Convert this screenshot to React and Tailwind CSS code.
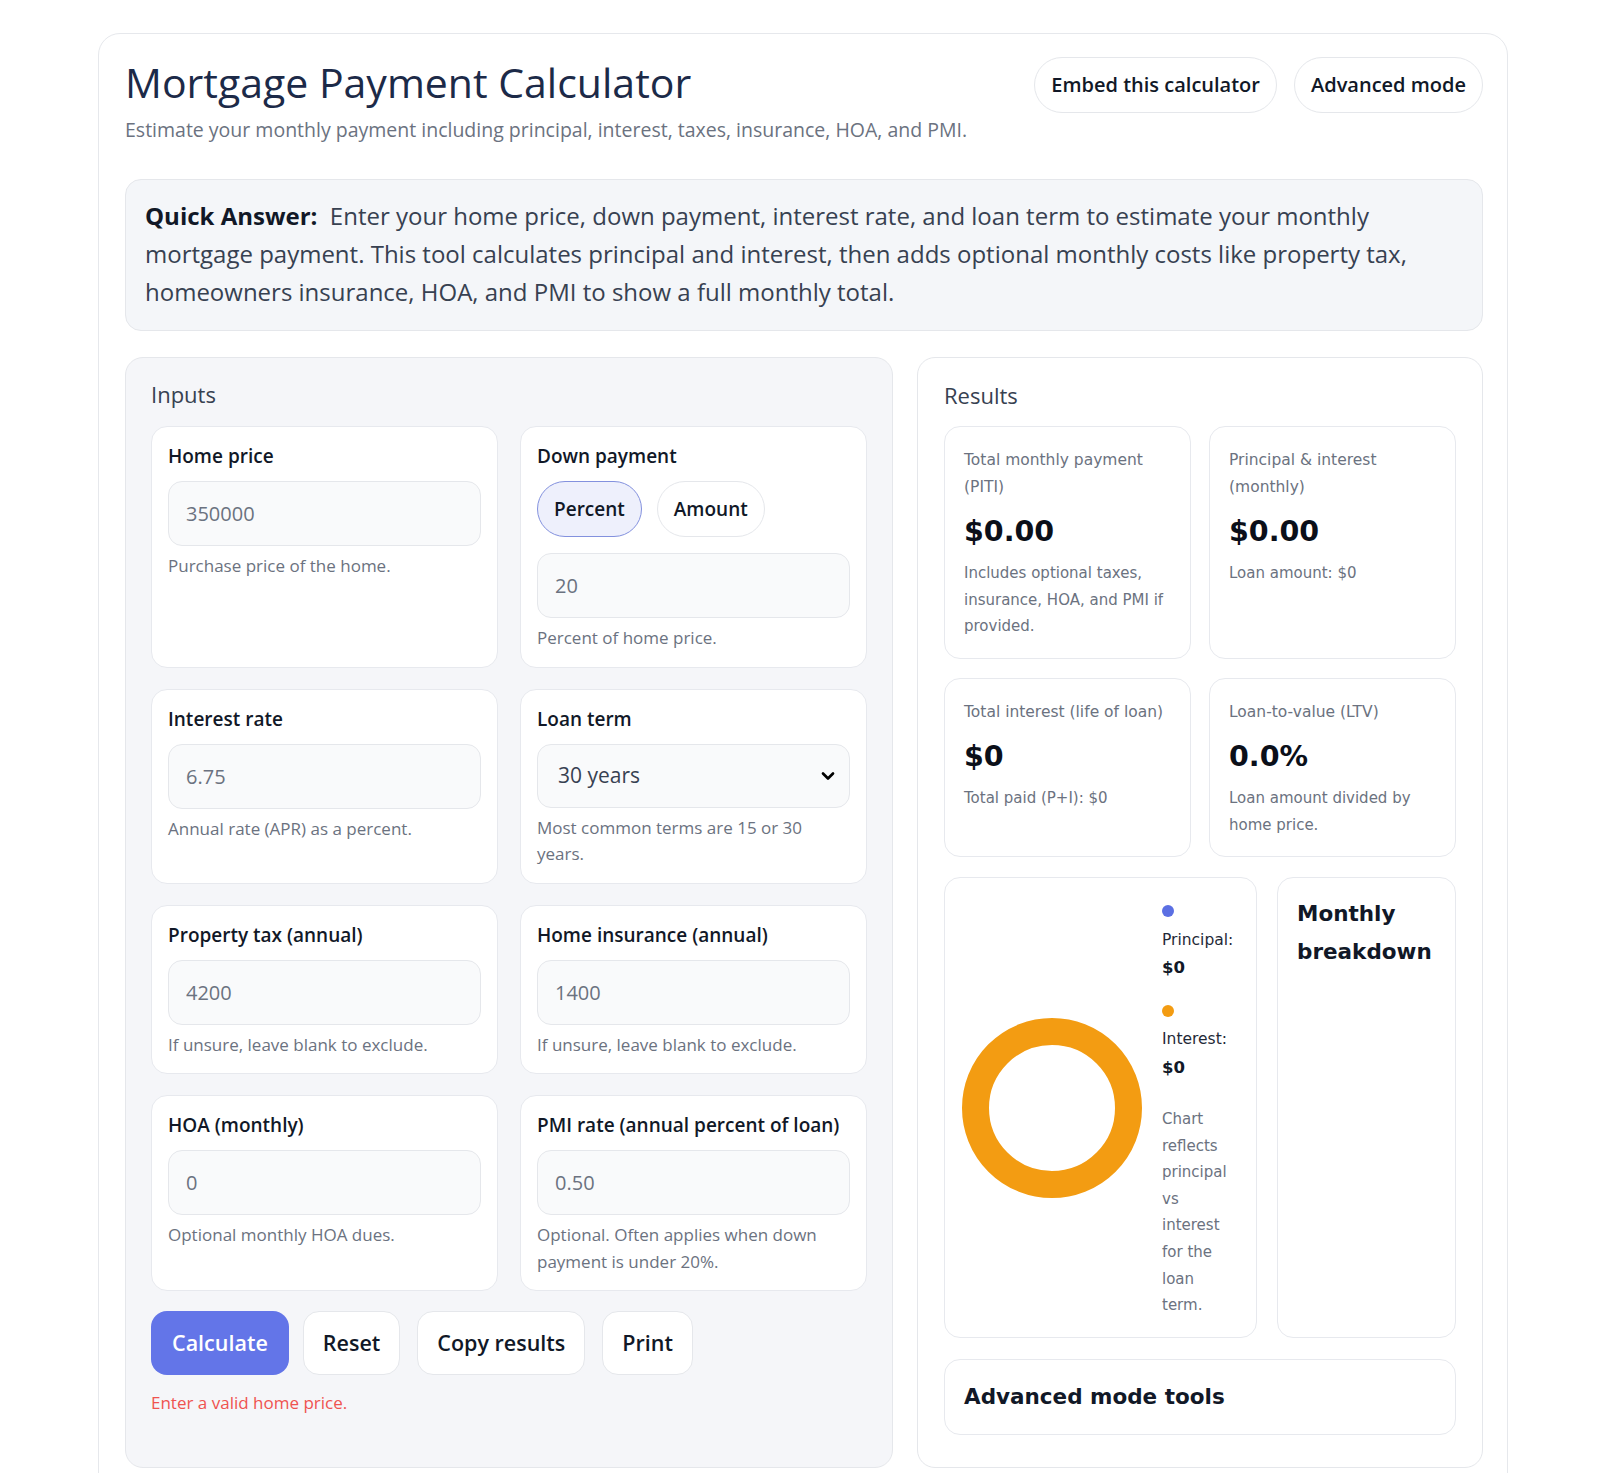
import { ChevronDown } from "lucide-react";

function Field({ label, help, children }) {
  return (
    <div className="rounded-[16px] border border-[#e7e9ee] bg-white px-[16px] pt-[16px] pb-[15px]">
      <div className="text-[19px] font-semibold leading-[26px] text-[#111827]">{label}</div>
      {children}
      <p className="mt-[7px] text-[17px] leading-[26.5px] text-[#6b7280]">{help}</p>
    </div>
  );
}

function TextInput({ value, className = "" }) {
  return (
    <input
      type="text"
      defaultValue={value}
      className={`block h-[65px] w-full rounded-[14px] border border-[#e5e7eb] bg-[#f9fafb] px-[17px] text-[20px] text-[#6b7280] outline-none ${className}`}
    />
  );
}

function Pill({ active, children }) {
  return (
    <button
      type="button"
      className={
        active
          ? "h-[56px] rounded-full border-[1.5px] border-[#8391de] bg-[#eef0fc] px-[16px] text-[19px] font-semibold text-[#111827]"
          : "h-[56px] rounded-full border border-[#e5e7eb] bg-white px-[16px] text-[19px] font-semibold text-[#111827]"
      }
    >
      {children}
    </button>
  );
}

function ResultCard({ label, value, desc }) {
  return (
    <div className="rounded-[16px] border border-[#e7e9ee] bg-white px-[19px] pt-[20px] pb-[18px] font-['DejaVu_Sans',sans-serif]">
      <div className="text-[15.5px] leading-[26.5px] text-[#6b7280]">{label}</div>
      <div className="mt-[12px] text-[28.5px] font-bold leading-[40px] text-[#0b0f19]">{value}</div>
      <div className="mt-[8px] text-[15px] leading-[26.5px] text-[#6b7280]">{desc}</div>
    </div>
  );
}

const actionButton =
  "h-[64px] rounded-[16px] border border-[#e5e7eb] bg-white px-[19px] text-[21.5px] font-semibold text-[#111827]";

export default function App() {
  return (
    <div className="min-h-screen bg-white pt-[33px] font-['Open_Sans',sans-serif]">
      <div className="ml-[98px] w-[1410px] rounded-[22px] border border-[#e6e8ec] bg-white pt-[23px] pb-[40px] pl-[26px] pr-[24px]">
        {/* Header */}
        <header className="flex items-start justify-between">
          <div>
            <h1 className="text-[41px] leading-[50px] text-[#1c2a48]">Mortgage Payment Calculator</h1>
            <p className="mt-[10px] text-[19.5px] leading-[26px] text-[#6b7280]">
              Estimate your monthly payment including principal, interest, taxes, insurance, HOA, and PMI.
            </p>
          </div>
          <div className="flex gap-[17px]">
            <button type="button" className="h-[56px] rounded-full border border-[#e5e7eb] bg-white px-[16px] text-[20px] font-semibold text-[#111827]">
              Embed this calculator
            </button>
            <button type="button" className="h-[56px] rounded-full border border-[#e5e7eb] bg-white px-[16px] text-[20px] font-semibold text-[#111827]">
              Advanced mode
            </button>
          </div>
        </header>

        {/* Quick answer */}
        <div className="mt-[36px] rounded-[16px] border border-[#e5e7eb] bg-[#f4f6f9] px-[19px] pt-[17px] pb-[19px]">
          <p className="text-[24px] leading-[38px] text-[#374151]">
            <strong className="font-bold text-[#111827]">Quick Answer:</strong>{"\u00a0 "}
            Enter your home price, down payment, interest rate, and loan term to estimate your monthly mortgage payment. This tool calculates principal and interest, then adds optional monthly costs like property tax, homeowners insurance, HOA, and PMI to show a full monthly total.
          </p>
        </div>

        {/* Main */}
        <div className="mt-[26px] grid grid-cols-[768px_1fr] gap-[24px]">
          {/* Inputs */}
          <section className="rounded-[18px] border border-[#e5e7eb] bg-[#f5f6f9] px-[25px] pt-[21px] pb-[24px]">
            <h2 className="text-[22px] leading-[30px] text-[#374151]">Inputs</h2>
            <div className="mt-[17px] grid grid-cols-2 gap-x-[22px] gap-y-[21px]">
              <Field label="Home price" help="Purchase price of the home.">
                <TextInput value="350000" className="mt-[12px]" />
              </Field>
              <Field label="Down payment" help="Percent of home price.">
                <div className="mt-[12px] flex gap-[15px]">
                  <Pill active>Percent</Pill>
                  <Pill>Amount</Pill>
                </div>
                <TextInput value="20" className="mt-[16px]" />
              </Field>
              <Field label="Interest rate" help="Annual rate (APR) as a percent.">
                <TextInput value="6.75" className="mt-[12px]" />
              </Field>
              <Field label="Loan term" help="Most common terms are 15 or 30 years.">
                <div className="relative mt-[12px]">
                  <select
                    defaultValue="30"
                    className="block h-[64px] w-full appearance-none rounded-[14px] border border-[#e5e7eb] bg-[#f9fafb] px-[20px] text-[21px] text-[#374151] outline-none"
                  >
                    <option value="15">15 years</option>
                    <option value="20">20 years</option>
                    <option value="30">30 years</option>
                  </select>
                  <ChevronDown className="pointer-events-none absolute right-[12px] top-[22px] h-[20px] w-[20px] text-black" strokeWidth={3.2} />
                </div>
              </Field>
              <Field label="Property tax (annual)" help="If unsure, leave blank to exclude.">
                <TextInput value="4200" className="mt-[12px]" />
              </Field>
              <Field label="Home insurance (annual)" help="If unsure, leave blank to exclude.">
                <TextInput value="1400" className="mt-[12px]" />
              </Field>
              <Field label="HOA (monthly)" help="Optional monthly HOA dues.">
                <TextInput value="0" className="mt-[12px]" />
              </Field>
              <Field label="PMI rate (annual percent of loan)" help="Optional. Often applies when down payment is under 20%.">
                <TextInput value="0.50" className="mt-[12px]" />
              </Field>
            </div>

            <div className="mt-[20px] flex gap-[17px]">
              <button type="button" className="-mr-[3px] h-[64px] rounded-[16px] bg-[#6375e8] px-[21px] text-[21.5px] font-semibold text-white">
                Calculate
              </button>
              <button type="button" className={actionButton}>
                Reset
              </button>
              <button type="button" className={actionButton}>
                Copy results
              </button>
              <button type="button" className={actionButton}>
                Print
              </button>
            </div>
            <p className="mt-[15px] text-[17px] leading-[26px] text-[#ef5350]">Enter a valid home price.</p>
          </section>

          {/* Results */}
          <section className="rounded-[18px] border border-[#e5e7eb] bg-white px-[26px] pt-[22px] pb-[32px]">
            <h2 className="text-[22px] leading-[30px] text-[#374151]">Results</h2>
            <div className="mt-[16px] grid grid-cols-2 gap-x-[18px] gap-y-[19px]">
              <ResultCard
                label="Total monthly payment (PITI)"
                value="$0.00"
                desc="Includes optional taxes, insurance, HOA, and PMI if provided."
              />
              <ResultCard label="Principal & interest (monthly)" value="$0.00" desc="Loan amount: $0" />
              <ResultCard label="Total interest (life of loan)" value="$0" desc="Total paid (P+I): $0" />
              <ResultCard label="Loan-to-value (LTV)" value="0.0%" desc="Loan amount divided by home price." />
            </div>

            <div className="mt-[20px] grid grid-cols-[313px_1fr] gap-[20px] font-['DejaVu_Sans',sans-serif]">
              {/* Principal vs interest chart */}
              <div className="flex items-center gap-[20px] rounded-[16px] border border-[#e7e9ee] bg-white px-[17px] pt-[19px] pb-[18px]">
                <svg width="180" height="180" viewBox="0 0 180 180" className="shrink-0">
                  <circle cx="90" cy="90" r="76.5" fill="none" stroke="#f39c12" strokeWidth="27" />
                </svg>
                <div className="w-[80px] self-start text-[15.5px] text-[#1f2937]">
                  <div className="leading-[28.5px]">
                    <div className="flex h-[28.5px] items-center">
                      <span className="inline-block h-[12px] w-[12px] rounded-full bg-[#5b6fe3]" />
                    </div>
                    <div>Principal:</div>
                    <div className="text-[16.5px] font-bold text-[#111827]">$0</div>
                  </div>
                  <div className="mt-[14px] leading-[28.5px]">
                    <div className="flex h-[28.5px] items-center">
                      <span className="inline-block h-[12px] w-[12px] rounded-full bg-[#f39c12]" />
                    </div>
                    <div>Interest:</div>
                    <div className="text-[16.5px] font-bold text-[#111827]">$0</div>
                  </div>
                  <p className="mt-[24px] text-[15px] leading-[26.6px] text-[#6b7280]">
                    Chart reflects principal vs interest for the loan term.
                  </p>
                </div>
              </div>

              {/* Monthly breakdown */}
              <div className="rounded-[16px] border border-[#e7e9ee] bg-white px-[19px] pt-[17px]">
                <h3 className="text-[21.5px] font-bold leading-[38px] text-[#111827]">Monthly breakdown</h3>
              </div>
            </div>

            <div className="mt-[21px] flex h-[76px] items-center rounded-[16px] border border-[#e7e9ee] bg-white px-[19px] font-['DejaVu_Sans',sans-serif]">
              <h3 className="text-[21.5px] font-bold text-[#111827]">Advanced mode tools</h3>
            </div>
          </section>
        </div>
      </div>
    </div>
  );
}
